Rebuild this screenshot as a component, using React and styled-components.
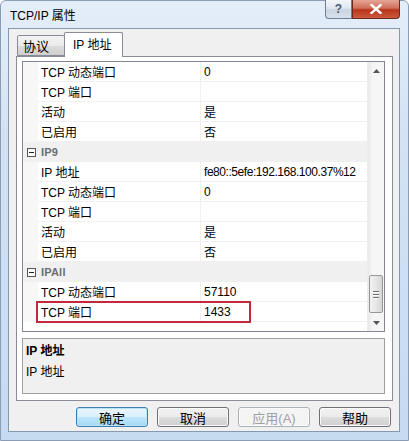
import React from 'react';
import styled, { createGlobalStyle } from 'styled-components';

const Global = createGlobalStyle`
  html, body { margin: 0; padding: 0; background: #fff; }
  body { width: 409px; height: 441px; overflow: hidden; }
  * { box-sizing: border-box; }
`;

const FONT = `"Liberation Sans", "Noto Sans CJK SC", sans-serif`;

const Window = styled.div`
  width: 409px;
  height: 441px;
  display: flex;
  flex-direction: column;
  background: linear-gradient(180deg, #e4eef9 0%, #d3e3f4 30%, #c6daf0 100%);
  border: 1px solid #8a9db4;
  border-radius: 6px 6px 0 0;
  font-family: ${FONT};
  font-size: 12px;
  color: #000;
`;

const TitleBar = styled.div`
  height: 27px;
  display: flex;
  align-items: flex-start;
  padding-left: 9px;
`;

const Title = styled.div`
  margin-top: 5px;
  font-size: 12px;
  color: #000;
  flex: 1;
`;

const CapBtn = styled.div`
  height: 19px;
  width: ${p => p.$w}px;
  margin-top: -1px;
  display: flex;
  align-items: center;
  justify-content: center;
  border: 1px solid ${p => (p.$close ? '#6b2a1f' : '#6f7f93')};
  border-top: none;
  border-radius: ${p => (p.$close ? '0 0 4px 0' : '0 0 0 4px')};
  background: ${p =>
    p.$close
      ? 'linear-gradient(180deg, #e4a595 0%, #d0705a 45%, #b8331b 55%, #cc5c3f 100%)'
      : 'linear-gradient(180deg, #f3f6fa 0%, #e0e7ef 45%, #c9d4e1 55%, #d8e2ee 100%)'};
  color: ${p => (p.$close ? '#fff' : '#4b5a6e')};
  font-weight: bold;
  font-size: 12px;
  margin-right: ${p => (p.$close ? '8px' : '0')};
`;

const Client = styled.div`
  flex: 1;
  margin: 0 8px 8px 7px;
  background: #f0f0f0;
  border: 1px solid #8599b0;
  display: flex;
  flex-direction: column;
  padding: 3px 6px 0 7px;
`;

const TabStrip = styled.div`
  height: 24px;
  display: flex;
  align-items: flex-end;
  padding-left: 1px;
  position: relative;
  z-index: 1;
`;

const Tab = styled.div`
  height: ${p => (p.$active ? 25 : 21)}px;
  width: ${p => p.$w}px;
  margin-bottom: ${p => (p.$active ? -1 : 0)}px;
  margin-left: ${p => (p.$active ? -1 : 0)}px;
  border: 1px solid #898c95;
  border-bottom: ${p => (p.$active ? 'none' : '1px solid #898c95')};
  border-radius: 2px 2px 0 0;
  background: ${p =>
    p.$active ? '#fff' : 'linear-gradient(180deg, #f2f2f2 0%, #ebebeb 50%, #dddddd 51%, #cfcfcf 100%)'};
  display: flex;
  align-items: center;
  padding-left: ${p => (p.$active ? 8 : 5)}px;
  padding-bottom: ${p => (p.$active ? 3 : 0)}px;
  font-size: ${p => (p.$active ? 12 : 13)}px;
`;

const Panel = styled.div`
  height: 345px;
  border: 1px solid #898c95;
  background: #fff;
  padding: 4px 7px 0 5px;
  display: flex;
  flex-direction: column;
`;

const Grid = styled.div`
  height: 271px;
  border: 1px solid #828790;
  background: #fff;
  display: flex;
`;

const Rows = styled.div`
  flex: 1;
  display: flex;
  flex-direction: column;
  overflow: hidden;
`;

const Row = styled.div`
  height: 20px;
  display: grid;
  grid-template-columns: 15px 163px 1fr;
  position: relative;
`;

const Margin = styled.div`
  background: #f7f7f7;
  display: flex;
  align-items: center;
  justify-content: center;
`;

const NameCell = styled.div`
  border-bottom: 1px solid #f0f0f0;
  border-right: 1px solid #f0f0f0;
  padding-left: 3px;
  display: flex;
  align-items: center;
  white-space: nowrap;
`;

const ValueCell = styled.div`
  border-bottom: 1px solid #f0f0f0;
  padding-left: 3px;
  display: flex;
  align-items: center;
  white-space: nowrap;
  overflow: hidden;
  letter-spacing: ${p => (p.$tight ? '-0.45px' : '0')};
`;

const CatCell = styled.div`
  grid-column: 2 / 4;
  background: #f0f0f0;
  padding-left: 3px;
  display: flex;
  align-items: center;
  font-weight: bold;
  color: #6d6d6d;
  font-size: 11px;
  letter-spacing: 0.2px;
`;

const CatMargin = styled(Margin)`
  background: #f0f0f0;
`;

const Toggle = styled.div`
  width: 9px;
  height: 9px;
  border: 1px solid #555;
  background: #fff;
  position: relative;
  margin-left: 2px;
  &::after {
    content: '';
    position: absolute;
    left: 1px;
    right: 1px;
    top: 3px;
    height: 1px;
    background: #222;
  }
`;

const Mark = styled.div`
  position: absolute;
  left: 13px;
  top: -1px;
  width: 215px;
  height: 22px;
  border: 2px solid #c3283c;
  pointer-events: none;
`;

const Scroll = styled.div`
  width: 17px;
  background: linear-gradient(90deg, #e9e9e9 0%, #f6f6f6 30%, #f6f6f6 100%);
  border-left: 1px solid #ededed;
  display: flex;
  flex-direction: column;
`;

const Arrow = styled.div`
  height: 17px;
  display: flex;
  align-items: center;
  justify-content: center;
`;

const Track = styled.div`
  flex: 1;
  display: flex;
  flex-direction: column;
  justify-content: flex-end;
  padding-bottom: 1px;
`;

const Thumb = styled.div`
  height: 38px;
  margin: 0 1px;
  border: 1px solid #979797;
  border-radius: 2px;
  background: linear-gradient(90deg, #f2f2f2 0%, #e6e6e6 50%, #d6d6d6 100%);
  display: flex;
  flex-direction: column;
  align-items: center;
  justify-content: center;
  gap: 2px;
`;

const Grip = styled.div`
  width: 6px;
  height: 1px;
  background: #6f6f6f;
  box-shadow: 0 1px 0 #fff;
`;

const Desc = styled.div`
  margin-top: 6px;
  height: 56px;
  border: 1px solid #a0a0a0;
  background: #f0f0f0;
  padding: 1px 3px;
  display: flex;
  flex-direction: column;
`;

const DescTitle = styled.div`
  font-weight: bold;
  height: 19px;
  display: flex;
  align-items: center;
  font-size: 12px;
`;

const DescText = styled.div`
  height: 22px;
  display: flex;
  align-items: center;
`;

const ButtonBar = styled.div`
  display: flex;
  justify-content: flex-end;
  gap: 9px;
  padding: 6px 2px 0 0;
`;

const Button = styled.div`
  width: 72px;
  height: 20px;
  border-radius: 3px;
  display: flex;
  align-items: center;
  justify-content: center;
  font-size: 13px;
  border: 1px solid ${p => (p.$default ? '#3c7fb1' : p.$disabled ? '#adb2b5' : '#707070')};
  color: ${p => (p.$disabled ? '#a0a0a0' : '#000')};
  background: ${p =>
    p.$default
      ? 'linear-gradient(180deg, #eaf6fd 0%, #d9f0fc 50%, #bee6fd 51%, #a7d9f5 100%)'
      : p.$disabled
      ? '#f4f4f4'
      : 'linear-gradient(180deg, #f2f2f2 0%, #ebebeb 50%, #dddddd 51%, #cfcfcf 100%)'};
  box-shadow: ${p => (p.$default ? 'inset 0 0 0 1px #b8e3f9' : 'inset 0 0 0 1px #fafafa')};
`;

const rows = [
  { n: 'TCP 动态端口', v: '0' },
  { n: 'TCP 端口', v: '' },
  { n: '活动', v: '是' },
  { n: '已启用', v: '否' },
  { cat: 'IP9' },
  { n: 'IP 地址', v: 'fe80::5efe:192.168.100.37%12', tight: true },
  { n: 'TCP 动态端口', v: '0' },
  { n: 'TCP 端口', v: '' },
  { n: '活动', v: '是' },
  { n: '已启用', v: '否' },
  { cat: 'IPAll' },
  { n: 'TCP 动态端口', v: '57110' },
  { n: 'TCP 端口', v: '1433', mark: true },
];

export default function App() {
  return (
    <>
      <Global />
      <Window>
        <TitleBar>
          <Title>TCP/IP 属性</Title>
          <CapBtn $w={27}>?</CapBtn>
          <CapBtn $w={48} $close>
            <svg width="12" height="10" viewBox="0 0 12 10">
              <path d="M1.5 1 L10.5 9 M10.5 1 L1.5 9" stroke="#fff" strokeWidth="2.4" strokeLinecap="square" />
            </svg>
          </CapBtn>
        </TitleBar>
        <Client>
          <TabStrip>
            <Tab $w={48}>协议</Tab>
            <Tab $w={59} $active>IP 地址</Tab>
          </TabStrip>
          <Panel>
            <Grid>
              <Rows>
                {rows.map((r, i) =>
                  r.cat ? (
                    <Row key={i}>
                      <CatMargin>
                        <Toggle />
                      </CatMargin>
                      <CatCell>{r.cat}</CatCell>
                    </Row>
                  ) : (
                    <Row key={i}>
                      <Margin />
                      <NameCell>{r.n}</NameCell>
                      <ValueCell $tight={r.tight}>{r.v}</ValueCell>
                      {r.mark && <Mark />}
                    </Row>
                  )
                )}
              </Rows>
              <Scroll>
                <Arrow>
                  <svg width="7" height="4" viewBox="0 0 7 4">
                    <path d="M0 4 L3.5 0 L7 4 Z" fill="#555" />
                  </svg>
                </Arrow>
                <Track>
                  <Thumb>
                    <Grip />
                    <Grip />
                    <Grip />
                  </Thumb>
                </Track>
                <Arrow>
                  <svg width="7" height="4" viewBox="0 0 7 4">
                    <path d="M0 0 L3.5 4 L7 0 Z" fill="#555" />
                  </svg>
                </Arrow>
              </Scroll>
            </Grid>
            <Desc>
              <DescTitle>IP 地址</DescTitle>
              <DescText>IP 地址</DescText>
            </Desc>
          </Panel>
          <ButtonBar>
            <Button $default>确定</Button>
            <Button>取消</Button>
            <Button $disabled>应用(A)</Button>
            <Button>帮助</Button>
          </ButtonBar>
        </Client>
      </Window>
    </>
  );
}
